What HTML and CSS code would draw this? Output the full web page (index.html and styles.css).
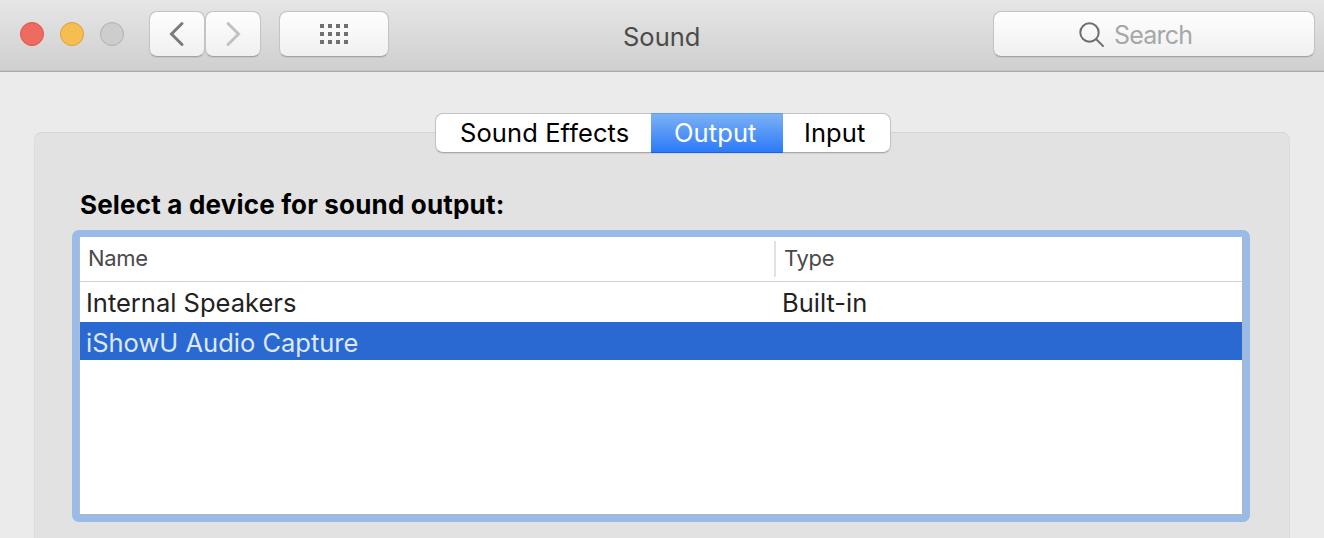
FILE: index.html
```html
<!DOCTYPE html>
<html lang="en">
<head>
<meta charset="utf-8">
<title>Sound</title>
<link rel="stylesheet" href="styles.css">
</head>
<body>
<header class="toolbar">
  <div class="lights"><span class="light close"></span><span class="light minimize"></span><span class="light zoom"></span></div>
  <div class="nav">
    <button class="button arrow" aria-label="Back"><svg width="54" height="44" viewBox="0 0 54 44"><path d="M32 11.5 21.5 22 32 32.5" fill="none" stroke="#7b7b7b" stroke-width="3" stroke-linecap="round"/></svg></button>
    <button class="button arrow" aria-label="Forward"><svg width="54" height="44" viewBox="0 0 54 44"><path d="M22 11.5 32.5 22 22 32.5" fill="none" stroke="#c2c2c2" stroke-width="3" stroke-linecap="round"/></svg></button>
  </div>
  <button class="button all" aria-label="Show all"><svg width="28" height="20" viewBox="0 0 28 20"><path d="M0 2H28M0 10H28M0 18H28" stroke="#707070" stroke-width="4" stroke-dasharray="4 4"/></svg></button>
  <h1 class="title"><span>Sound</span></h1>
  <div class="button search"><svg width="26" height="26" viewBox="0 0 26 26"><g fill="none" stroke="#6e6e6e" stroke-width="2"><circle cx="10.5" cy="10.5" r="9.2"/><path d="M17 17 24.6 24.6"/></g></svg><span class="placeholder">Search</span></div>
</header>
<main class="content">
  <section class="panel">
    <nav class="tabs">
      <span class="tab effects">Sound Effects</span><span class="tab output">Output</span><span class="tab input">Input</span>
    </nav>
    <h2 class="label"><span>Select a device for sound output:</span></h2>
    <div class="table">
      <div class="row head"><span class="cell name">Name</span><span class="cell type">Type</span></div>
      <div class="row"><span class="cell speakers">Internal Speakers</span><span class="cell builtin">Built-in</span></div>
      <div class="row selected"><span class="cell capture">iShowU Audio Capture</span></div>
    </div>
  </section>
</main>
</body>
</html>
```
FILE: styles.css
```css
* { box-sizing: border-box; }
body { margin: 0; width: 1324px; height: 538px; overflow: hidden; background: #ebebeb; font: 25.5px/30px Inter, "Liberation Sans", sans-serif; color: #000; }
svg { display: block; flex: none; }
.toolbar { display: flex; align-items: flex-start; height: 72px; padding: 11px 9px 0 20px; background: linear-gradient(#e6e6e6, #cfcfcf); border-bottom: 1px solid #aaa; box-shadow: inset 0 -1px #c5c5c5; }
.lights { display: flex; gap: 16px; width: 129px; padding-top: 11px; }
.light { width: 24px; height: 24px; border: 1px solid; border-radius: 50%; }
.close { background: #ed6b60; border-color: #d9544b; }
.minimize { background: #f6be50; border-color: #d9a13b; }
.zoom { background: #cdcdcd; border-color: #b0b0b0; }
.nav { display: flex; width: 130px; }
.button { display: flex; align-items: center; justify-content: center; height: 46px; padding: 0; border: 1px solid #c4c4c4; border-bottom-color: #a3a3a3; border-radius: 8px; background: linear-gradient(#fefefe, #f0f0f0) padding-box; box-shadow: 0 1px 1px rgba(0, 0, 0, .07); }
.arrow { width: 56px; }
.all { width: 110px; }
.title { flex: 1; margin: 0; padding: 11px 0 0 234px; font-size: 25.5px; font-weight: 400; color: #4b4b4b; }
.search { width: 322px; justify-content: flex-start; padding: 2px 0 0 85px; }
.placeholder { padding-left: 9px; color: #a7a7a7; font-size: 25px; letter-spacing: -.8px; }
.content { padding: 60px 34px 0; }
.panel { height: 420px; border: 1px solid #d5d5d5; border-left-color: #dbdbdb; border-right-color: #dbdbdb; border-radius: 8px; background: #e2e2e2; padding: 0 37px; }
.tabs { display: flex; width: 456px; height: 40px; margin: -20px auto 0 363px; border: 1px solid #c3c3c3; border-bottom-color: #a9a9a9; border-radius: 8px; background: #fff; line-height: 38px; box-shadow: 0 1px 1px rgba(0, 0, 0, .08); }
.tab { white-space: nowrap; letter-spacing: .1px; }
.effects { width: 215px; padding-left: 24px; }
.output { width: 132px; height: 40px; margin-top: -1px; padding: 0 0 0 23px; color: #fff; background: linear-gradient(#7bb1f5, #2d7af8); border-top: 1px solid #629eec; border-bottom: 1px solid #1c60e6; line-height: 38px; }
.input { padding-left: 21px; }
.label { margin: 37px 0 10px 8px; font-size: 26px; font-weight: 700; line-height: 30px; letter-spacing: .18px; white-space: nowrap; }
.table { width: 1178px; height: 292px; border: 7px solid #9abbe8; border-radius: 7px; background: #fff; box-shadow: inset 1px 0 #b4bcc6, inset -1px 0 #b4b4b0, inset 0 -1px #b4b4b0; padding-left: 1px; padding-right: 1px; }
.row { display: grid; grid-template-columns: 696px 1fr; height: 40px; padding-left: 6px; line-height: 42px; color: #222; white-space: nowrap; }
.head { height: 45px; padding-left: 8px; grid-template-columns: 686px 1fr; border-bottom: 1px solid #d2d2d2; font-size: 22px; line-height: 43px; letter-spacing: -.3px; color: #4a4a4a; }
.type { height: 36px; margin-top: 4px; padding-left: 8px; border-left: 2px solid #e1e1e1; line-height: 35px; }
.selected { height: 38px; background: #2969d1; color: #dfe8f7; }
```
